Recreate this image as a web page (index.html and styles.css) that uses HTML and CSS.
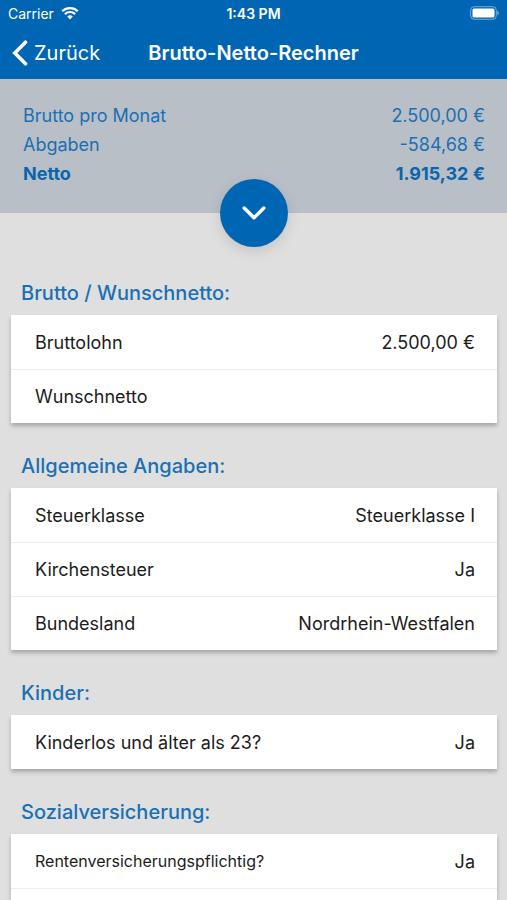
FILE: index.html
```html
<!DOCTYPE html>
<html lang="de">
<head>
  <meta charset="UTF-8">
  <meta name="viewport" content="width=device-width, initial-scale=1">
  <title>Brutto-Netto-Rechner</title>
  <link rel="stylesheet" href="styles.css">
</head>
<body>

  <header class="header">
    <div class="status-bar">
      <div class="carrier">
        <span>Carrier</span>
        <svg class="wifi" viewBox="0 0 18 14" aria-hidden="true">
          <path d="M1.2 5.2a11.2 11.2 0 0 1 15.6 0" />
          <path d="M3.9 8.1a7.3 7.3 0 0 1 10.2 0" />
          <path class="wifi-dot" d="M6.2 10.6a4 4 0 0 1 5.6 0L9 13.5z" />
        </svg>
      </div>
      <span class="time">1:43 PM</span>
      <svg class="battery" viewBox="0 0 30 14" aria-hidden="true">
        <rect class="battery-case" x="1.7" y="0.7" width="25.6" height="12.6" rx="3.5" />
        <rect class="battery-level" x="3.5" y="2.5" width="22" height="9" rx="1.5" />
        <path class="battery-tip" d="M28.3 4.8c2 .8 2 3.6 0 4.4z" />
      </svg>
    </div>
    <nav class="nav-bar">
      <a class="back" href="#">
        <svg class="back-icon" viewBox="0 0 16 26" aria-hidden="true">
          <path d="M13.5 2.2L2.8 13l10.7 10.8" />
        </svg>
        <span>Zurück</span>
      </a>
      <h1 class="title">Brutto-Netto-Rechner</h1>
    </nav>
  </header>

  <section class="summary">
    <dl class="totals">
      <div class="total"><dt>Brutto pro Monat</dt><dd>2.500,00 €</dd></div>
      <div class="total"><dt>Abgaben</dt><dd>-584,68 €</dd></div>
      <div class="total total-net"><dt>Netto</dt><dd>1.915,32 €</dd></div>
    </dl>
    <button class="expand" type="button" aria-label="Details anzeigen">
      <svg class="expand-icon" viewBox="0 0 24 14" aria-hidden="true">
        <path d="M2.2 2l9.8 9.8L21.8 2" />
      </svg>
    </button>
  </section>

  <form class="content">
    <h2 class="section-title">Brutto / Wunschnetto:</h2>
    <div class="card">
      <div class="row">
        <label for="brutto">Bruttolohn</label>
        <input class="value" id="brutto" type="text" value="2.500,00 €">
      </div>
      <div class="row">
        <label for="wunschnetto">Wunschnetto</label>
        <input class="value" id="wunschnetto" type="text">
      </div>
    </div>

    <h2 class="section-title">Allgemeine Angaben:</h2>
    <div class="card">
      <div class="row">
        <label for="steuerklasse">Steuerklasse</label>
        <select class="value" id="steuerklasse"><option>Steuerklasse I</option></select>
      </div>
      <div class="row">
        <label for="kirchensteuer">Kirchensteuer</label>
        <select class="value" id="kirchensteuer"><option>Ja</option></select>
      </div>
      <div class="row">
        <label for="bundesland">Bundesland</label>
        <select class="value" id="bundesland"><option>Nordrhein-Westfalen</option></select>
      </div>
    </div>

    <h2 class="section-title">Kinder:</h2>
    <div class="card">
      <div class="row">
        <label for="kinderlos">Kinderlos und älter als 23?</label>
        <select class="value" id="kinderlos"><option>Ja</option></select>
      </div>
    </div>

    <h2 class="section-title">Sozialversicherung:</h2>
    <div class="card">
      <div class="row">
        <label class="label-small" for="rente">Rentenversicherungspflichtig?</label>
        <select class="value" id="rente"><option>Ja</option></select>
      </div>
      <div class="row"></div>
    </div>
  </form>

</body>
</html>
```

FILE: styles.css
```css
* {
  box-sizing: border-box;
}

body {
  display: flex;
  flex-direction: column;
  height: 100vh;
  margin: 0;
  background: #dfdfdf;
  color: #1c1c1c;
  font-family: Inter, "Liberation Sans", sans-serif;
  font-size: 18px;
}

.header {
  flex: none;
  background: #0066b3;
  color: #fff;
}

.status-bar {
  display: grid;
  grid-template-columns: 1fr auto 1fr;
  align-items: center;
  height: 26px;
  padding: 0 8px;
  font-size: 14px;
}

.carrier {
  display: flex;
  align-items: center;
  gap: 7px;
}

.wifi {
  width: 18px;
  height: 14px;
  fill: none;
  stroke: #fff;
  stroke-width: 2.2;
}

.wifi-dot {
  fill: #fff;
  stroke: none;
}

.time {
  font-weight: 600;
}

.battery {
  justify-self: end;
  width: 30px;
  height: 14px;
  fill: #fff;
}

.battery-case {
  fill: none;
  stroke: #fff;
  stroke-opacity: 0.45;
}

.battery-tip {
  fill-opacity: 0.5;
}

.nav-bar {
  display: grid;
  grid-template-columns: 1fr auto 1fr;
  align-items: center;
  height: 53px;
  padding: 0 12px;
}

.back {
  display: flex;
  align-items: center;
  gap: 6px;
  color: #fff;
  font-size: 20px;
  text-decoration: none;
}

.back-icon {
  width: 16px;
  height: 26px;
  fill: none;
  stroke: #fff;
  stroke-width: 3.6;
  stroke-linecap: round;
}

.title {
  margin: 0;
  font-size: 20px;
  font-weight: 600;
}

.summary {
  position: relative;
  flex: none;
  height: 134px;
  padding: 22px 22px 0 23px;
  background: #b9bfc6;
  color: #1a70b4;
}

.totals {
  margin: 0;
}

.total {
  display: flex;
  justify-content: space-between;
  line-height: 29px;
}

.total dd {
  margin: 0;
}

.total-net {
  color: #0b65ad;
  font-weight: 700;
}

.expand {
  position: absolute;
  left: 50%;
  bottom: 0;
  display: flex;
  align-items: center;
  justify-content: center;
  width: 68px;
  height: 68px;
  padding: 0;
  border: 0;
  border-radius: 50%;
  background: #0066b3;
  box-shadow: 0 4px 14px rgba(0, 0, 0, 0.12);
  transform: translate(-50%, 50%);
}

.expand-icon {
  width: 24px;
  height: 14px;
  fill: none;
  stroke: #fff;
  stroke-width: 3.4;
  stroke-linecap: round;
  stroke-linejoin: round;
}

.content {
  flex: 1;
  min-height: 0;
  padding: 48px 10px 0 11px;
  overflow-y: auto;
  scrollbar-width: none;
}

.section-title {
  margin: 0;
  padding: 20px 10px 10px;
  color: #1a70b4;
  font-size: 20px;
  font-weight: 500;
  line-height: 24px;
}

.card {
  margin-bottom: 11px;
  background: #fff;
  box-shadow: 0 3px 4px rgba(0, 0, 0, 0.25);
}

.row {
  display: flex;
  align-items: center;
  justify-content: space-between;
  gap: 12px;
  height: 54px;
  padding: 0 22px 0 24px;
}

.row + .row {
  border-top: 1px solid #ececec;
}

.label-small {
  font-size: 16px;
}

.value {
  flex: 1;
  min-width: 0;
  padding: 0;
  border: 0;
  background: none;
  color: inherit;
  font: inherit;
  text-align: right;
  text-align-last: right;
  appearance: none;
}
```
